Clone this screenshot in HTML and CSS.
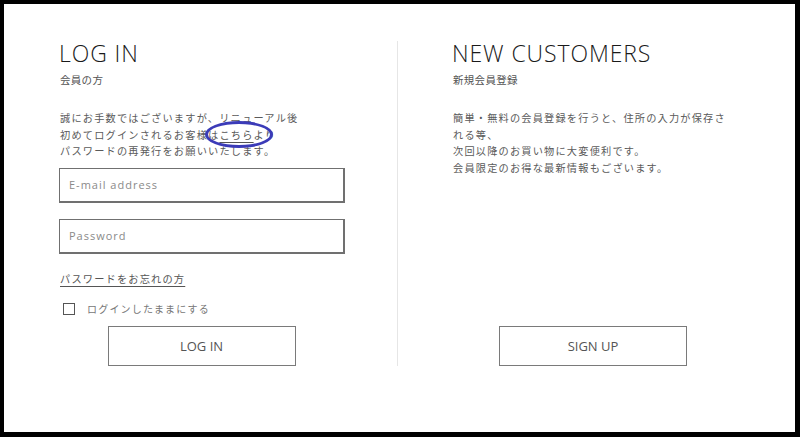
FILE: index.html
```html
<!DOCTYPE html>
<html lang="ja">
<head>
    <meta charset="utf-8">
    <title>LOG IN</title>
    <link rel="stylesheet" href="styles.css">
</head>
<body>

<div class="frame">
    <div class="account">

        <div class="col col-login">
            <h1>LOG IN</h1>
            <p class="sub">会員の方</p>
            <p class="note">
                誠にお手数ではございますが、リニューアル後<br>
                初めてログインされるお客様は<a href="#" class="link">こちら</a>より<br>
                パスワードの再発行をお願いいたします。
                <span class="mark"></span>
            </p>
            <input class="field field-mail" type="text" placeholder="E-mail address">
            <input class="field field-pass" type="password" placeholder="Password">
            <p class="forgot"><a href="#" class="link">パスワードをお忘れの方</a></p>
            <label class="keep">
                <span class="box"></span>
                <span>ログインしたままにする</span>
            </label>
            <a href="#" class="btn">LOG IN</a>
        </div>

        <div class="col col-new">
            <h1>NEW CUSTOMERS</h1>
            <p class="sub">新規会員登録</p>
            <p class="note">
                簡単・無料の会員登録を行うと、住所の入力が保存さ<br>
                れる等、<br>
                次回以降のお買い物に大変便利です。<br>
                会員限定のお得な最新情報もございます。
            </p>
            <a href="#" class="btn">SIGN UP</a>
        </div>

    </div>
</div>

</body>
</html>
```

FILE: styles.css
```css
body, html {
    width: 100%;
    height: 100%;
    margin: 0;
    padding: 0;
    background-color: #000;
    font-family: 'Noto Sans CJK JP', sans-serif;
}

.frame {
    box-sizing: border-box;
    width: 791px;
    height: 428px;
    margin: 4px 0 0 4px;
    padding-top: 37px;
    background-color: #fff;
}

.account {
    display: grid;
    grid-template-columns: 394px 1fr;
}

.col {
    display: flex;
    flex-direction: column;
    align-items: flex-start;
    width: 285px;
}

.col-login {
    padding-left: 55px;
    border-right: 1px solid #e6e6e6;
    width: auto;
    padding-right: 53px;
}

.col-new {
    padding-left: 54px;
}

h1 {
    margin: 1px 0 0 0;
    font-family: 'Open Sans', sans-serif;
    font-weight: 300;
    font-size: 23px;
    line-height: 22px;
    letter-spacing: 0.9px;
    color: #1a1a1a;
}

.sub {
    margin: 8px 0 0 1px;
    font-size: 10.5px;
    line-height: 16px;
    letter-spacing: 0.3px;
    color: #555;
}

.note {
    position: relative;
    margin: 22px 0 0 1px;
    font-size: 10.2px;
    line-height: 16.5px;
    letter-spacing: 1.2px;
    color: #5a5a5a;
    white-space: nowrap;
}

.link {
    color: #555;
    text-decoration: underline;
    text-underline-offset: 3px;
}

/* hand-drawn circle over the text */
.mark {
    position: absolute;
    left: 145px;
    top: 11px;
    width: 62px;
    height: 21px;
    border: 3.5px solid #3b3bb8;
    border-radius: 50%;
}

.field {
    box-sizing: border-box;
    width: 286px;
    height: 35px;
    margin: 8px 0 0 0;
    padding: 0 9px;
    border: 1px solid #707070;
    border-bottom-width: 2px;
    border-right-width: 2px;
    outline: none;
    font-family: 'Open Sans', sans-serif;
    font-size: 11px;
    letter-spacing: 1px;
    color: #333;
}

.field::placeholder {
    color: #8a8a8a;
}

.field-pass {
    margin-top: 16px;
}

.forgot {
    margin: 17px 0 0 1px;
    font-size: 10.2px;
    line-height: 16px;
    letter-spacing: 1.2px;
}

.keep {
    display: flex;
    align-items: center;
    gap: 12px;
    margin: 14px 0 0 4px;
    height: 16px;
    font-size: 10px;
    letter-spacing: 1.2px;
    color: #777;
}

.box {
    box-sizing: border-box;
    width: 12px;
    height: 12px;
    border: 1.5px solid #555;
}

.btn {
    box-sizing: border-box;
    display: flex;
    align-items: center;
    justify-content: center;
    align-self: center;
    width: 188px;
    height: 40px;
    margin-top: 9px;
    border: 1px solid #7a7a7a;
    font-family: 'Open Sans', sans-serif;
    font-size: 13px;
    color: #555;
    text-decoration: none;
}

.col-new .btn {
    margin-top: auto;
    margin-left: -3px;
}
```
